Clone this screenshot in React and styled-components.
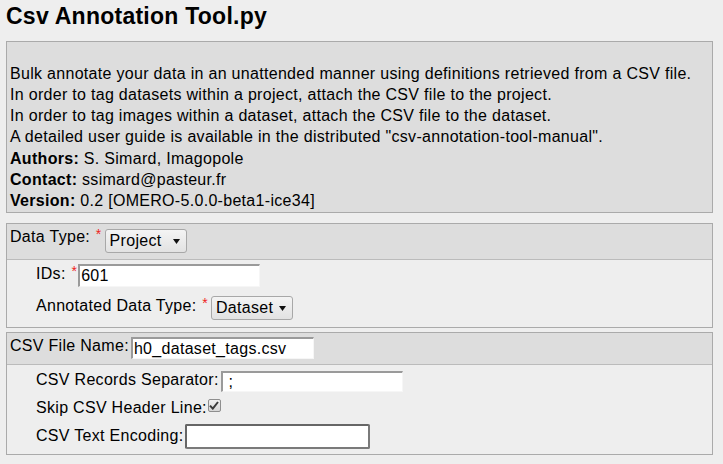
import React from 'react'
import styled, { createGlobalStyle } from 'styled-components'

const GlobalStyle = createGlobalStyle`
  body {
    margin: 0;
    background: #eeeeee;
    color: #000;
    font-family: 'Liberation Sans', Arial, sans-serif;
    font-size: 16px;
    letter-spacing: 0.3px;
  }
`

const Page = styled.div`
  padding: 0 10px 8px 6px;
`

const Title = styled.h1`
  margin: 0 0 12px 0;
  padding: 3px 0 0 0;
  font-size: 23px;
  line-height: 26px;
  font-weight: bold;
  letter-spacing: 0.25px;
`

const InfoBox = styled.div`
  border: 1px solid #aaaaaa;
  background: #dddddd;
  padding: 21px 3px 1px 3px;
  line-height: 21px;
  margin-bottom: 10px;
`

const Line = styled.div`
  margin-top: ${(p) => p.$mt || 0}px;
`

const Fieldset = styled.div`
  border: 1px solid #aaaaaa;
  background: #eeeeee;
  margin-bottom: 4px;
`

const Header = styled.div`
  display: flex;
  align-items: flex-start;
  background: #dddddd;
  border-bottom: 1px solid #bbbbbb;
  padding: ${(p) => p.$pad};
`

const Body = styled.div`
  padding: ${(p) => p.$pad};
`

const Row = styled.div`
  display: flex;
  align-items: flex-start;
  padding-left: 26px;
  margin-top: ${(p) => p.$mt || 0}px;
`

const Label = styled.span`
  line-height: 18px;
  white-space: pre;
  margin-top: ${(p) => p.$mt || 0}px;
`

const Req = styled.span`
  color: #ee2222;
  font-size: 14px;
  line-height: 1;
  vertical-align: 3px;
  margin: 0 -1px 0 1px;
`

const TextInput = styled.input`
  box-sizing: border-box;
  width: ${(p) => p.$w}px;
  height: ${(p) => p.$h}px;
  margin: 0 0 0 2px;
  padding: 0 1px;
  font-family: 'Liberation Sans', Arial, sans-serif;
  font-size: 16px;
  letter-spacing: 0.3px;
  color: #000;
  background: #ffffff;
  border-style: solid;
  border-width: 2px 1px 1px 2px;
  border-color: #9a9a9a #f6f6f6 #f6f6f6 #9a9a9a;
  outline: none;
`

const FocusInput = styled(TextInput)`
  border: 2px solid #7a7a7a;
  border-top-color: #666666;
  border-left-color: #666666;
  border-radius: 2px;
`

const SelectBox = styled.div`
  box-sizing: border-box;
  display: flex;
  align-items: center;
  justify-content: space-between;
  width: 82px;
  height: 24px;
  margin: ${(p) => p.$mt || 0}px 0 0 ${(p) => p.$ml || 0}px;
  padding: 0 6px 0 4px;
  border: 1px solid #a8a8a8;
  border-radius: 3px;
  background: linear-gradient(#f4f4f4, #e2e2e2);
  line-height: 18px;
`

const Check = styled.span`
  box-sizing: border-box;
  display: flex;
  align-items: center;
  justify-content: center;
  width: 13px;
  height: 13px;
  margin-left: 1px;
  border: 1px solid #8e8e8e;
  border-radius: 2px;
  background: linear-gradient(#f0f0f0, #d6d6d6);
`

const Arrow = () => (
  <svg width="7" height="5" viewBox="0 0 7 5">
    <polygon points="0,0 7,0 3.5,5" fill="#111" />
  </svg>
)

const Select = ({ value, mt, ml }) => (
  <SelectBox $mt={mt} $ml={ml}>
    <span>{value}</span>
    <Arrow />
  </SelectBox>
)

const Checkbox = () => (
  <Check>
    <svg width="10" height="9" viewBox="0 0 10 9">
      <path d="M1 4.6 L3.8 7.6 L9 1" fill="none" stroke="#3a3a3a" strokeWidth="2" />
    </svg>
  </Check>
)

export default function App() {
  return (
    <Page>
      <GlobalStyle />
      <Title>Csv Annotation Tool.py</Title>

      <InfoBox>
        <Line>Bulk annotate your data in an unattended manner using definitions retrieved from a CSV file.</Line>
        <Line>In order to tag datasets within a project, attach the CSV file to the project.</Line>
        <Line>In order to tag images within a dataset, attach the CSV file to the dataset.</Line>
        <Line>A detailed user guide is available in the distributed "csv-annotation-tool-manual".</Line>
        <Line $mt={1}><b>Authors:</b> S. Simard, Imagopole</Line>
        <Line><b>Contact:</b> ssimard@pasteur.fr</Line>
        <Line><b>Version:</b> 0.2 [OMERO-5.0.0-beta1-ice34]</Line>
      </InfoBox>

      <Fieldset>
        <Header $pad="3px 3px 6px">
          <Label>Data Type: <Req>*</Req></Label>
          <Select value="Project" mt={2} ml={4} />
        </Header>
        <Body $pad="4px 3px 7px">
          <Row>
            <Label>IDs: <Req>*</Req></Label>
            <TextInput $w={182} $h={23} defaultValue="601" readOnly />
          </Row>
          <Row $mt={9}>
            <Label>Annotated Data Type: <Req>*</Req></Label>
            <Select value="Dataset" ml={4} />
          </Row>
        </Body>
      </Fieldset>

      <Fieldset>
        <Header $pad="4px 3px 5px">
          <Label>CSV File Name:</Label>
          <TextInput $w={183} $h={22} defaultValue="h0_dataset_tags.csv" readOnly />
        </Header>
        <Body $pad="6px 3px 5px">
          <Row>
            <Label>CSV Records Separator:</Label>
            <TextInput $w={182} $h={21} defaultValue=" ;" readOnly />
          </Row>
          <Row $mt={7}>
            <Label>Skip CSV Header Line:</Label>
            <Checkbox />
          </Row>
          <Row $mt={7}>
            <Label $mt={3}>CSV Text Encoding:</Label>
            <FocusInput $w={185} $h={25} defaultValue="" readOnly />
          </Row>
        </Body>
      </Fieldset>
    </Page>
  )
}
